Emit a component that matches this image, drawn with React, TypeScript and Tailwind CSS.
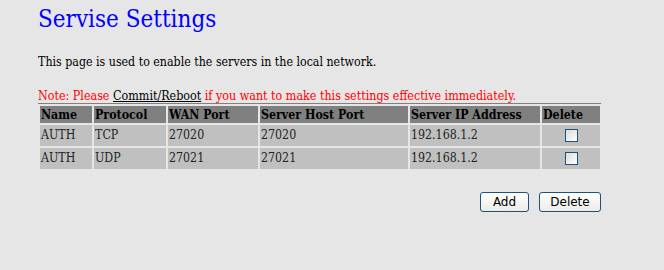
const rows = [
  { name: "AUTH", proto: "TCP", wan: "27020", host: "27020", ip: "192.168.1.2" },
  { name: "AUTH", proto: "UDP", wan: "27021", host: "27021", ip: "192.168.1.2" },
]

function Check() {
  return (
    <span className="inline-block w-[13px] h-[13px] border border-[#1c5180] bg-gradient-to-br from-[#dcdcd7] to-white align-middle" />
  )
}

export default function App() {
  return (
    <div className="w-[664px] h-[270px] bg-[#e6e6e6] font-['DejaVu_Serif',serif] [font-stretch:condensed] pl-[38px] pt-[5px]">
      {/* Title */}
      <h1 className="text-[24px] leading-[28px] text-[#0000ff]">Servise Settings</h1>

      <p className="mt-[21px] text-[12.3px] leading-[16px] text-black">
        This page is used to enable the servers in the local network.
      </p>

      <div className="w-[564px] mt-[19px]">
        <p className="text-[12.4px] leading-[14px] text-[#ff0000]">
          Note: Please <span className="text-black underline">Commit/Reboot</span> if you want to make this settings effective immediately.
        </p>
        <div className="w-[563px] h-[1px] bg-[#808080]" />

        <table className="w-[564px] table-fixed border-separate border-spacing-[2px] text-[12.3px]">
          <thead>
            <tr className="bg-[#808080] text-black font-bold h-[17px] leading-[15px]">
              <th className="text-left pl-[1px] w-[52px]">Name</th>
              <th className="text-left pl-[1px] w-[72px]">Protocol</th>
              <th className="text-left pl-[1px] w-[90px]">WAN Port</th>
              <th className="text-left pl-[1px] w-[148px]">Server Host Port</th>
              <th className="text-left pl-[1px] w-[130px]">Server IP Address</th>
              <th className="text-left pl-[1px]">Delete</th>
            </tr>
          </thead>
          <tbody>
            {rows.map((r, i) => (
              <tr key={i} className="bg-[#c0c0c0] text-[#222] h-[21px]">
                <td className="pl-[1px]">{r.name}</td>
                <td className="pl-[1px]">{r.proto}</td>
                <td className="pl-[1px]">{r.wan}</td>
                <td className="pl-[1px]">{r.host}</td>
                <td className="pl-[1px]">{r.ip}</td>
                <td className="text-center"><Check /></td>
              </tr>
            ))}
          </tbody>
        </table>

        <div className="flex justify-end gap-[10px] mt-[21px] pr-[1px]">
          <button className="w-[49px] h-[20px] rounded-[3px] border border-[#1c5180] bg-gradient-to-b from-white to-[#ecebe6] text-[12px] font-['DejaVu_Sans',sans-serif] [font-stretch:normal] text-black">
            Add
          </button>
          <button className="w-[62px] h-[20px] rounded-[3px] border border-[#1c5180] bg-gradient-to-b from-white to-[#ecebe6] text-[12px] font-['DejaVu_Sans',sans-serif] [font-stretch:normal] text-black">
            Delete
          </button>
        </div>
      </div>
    </div>
  )
}
